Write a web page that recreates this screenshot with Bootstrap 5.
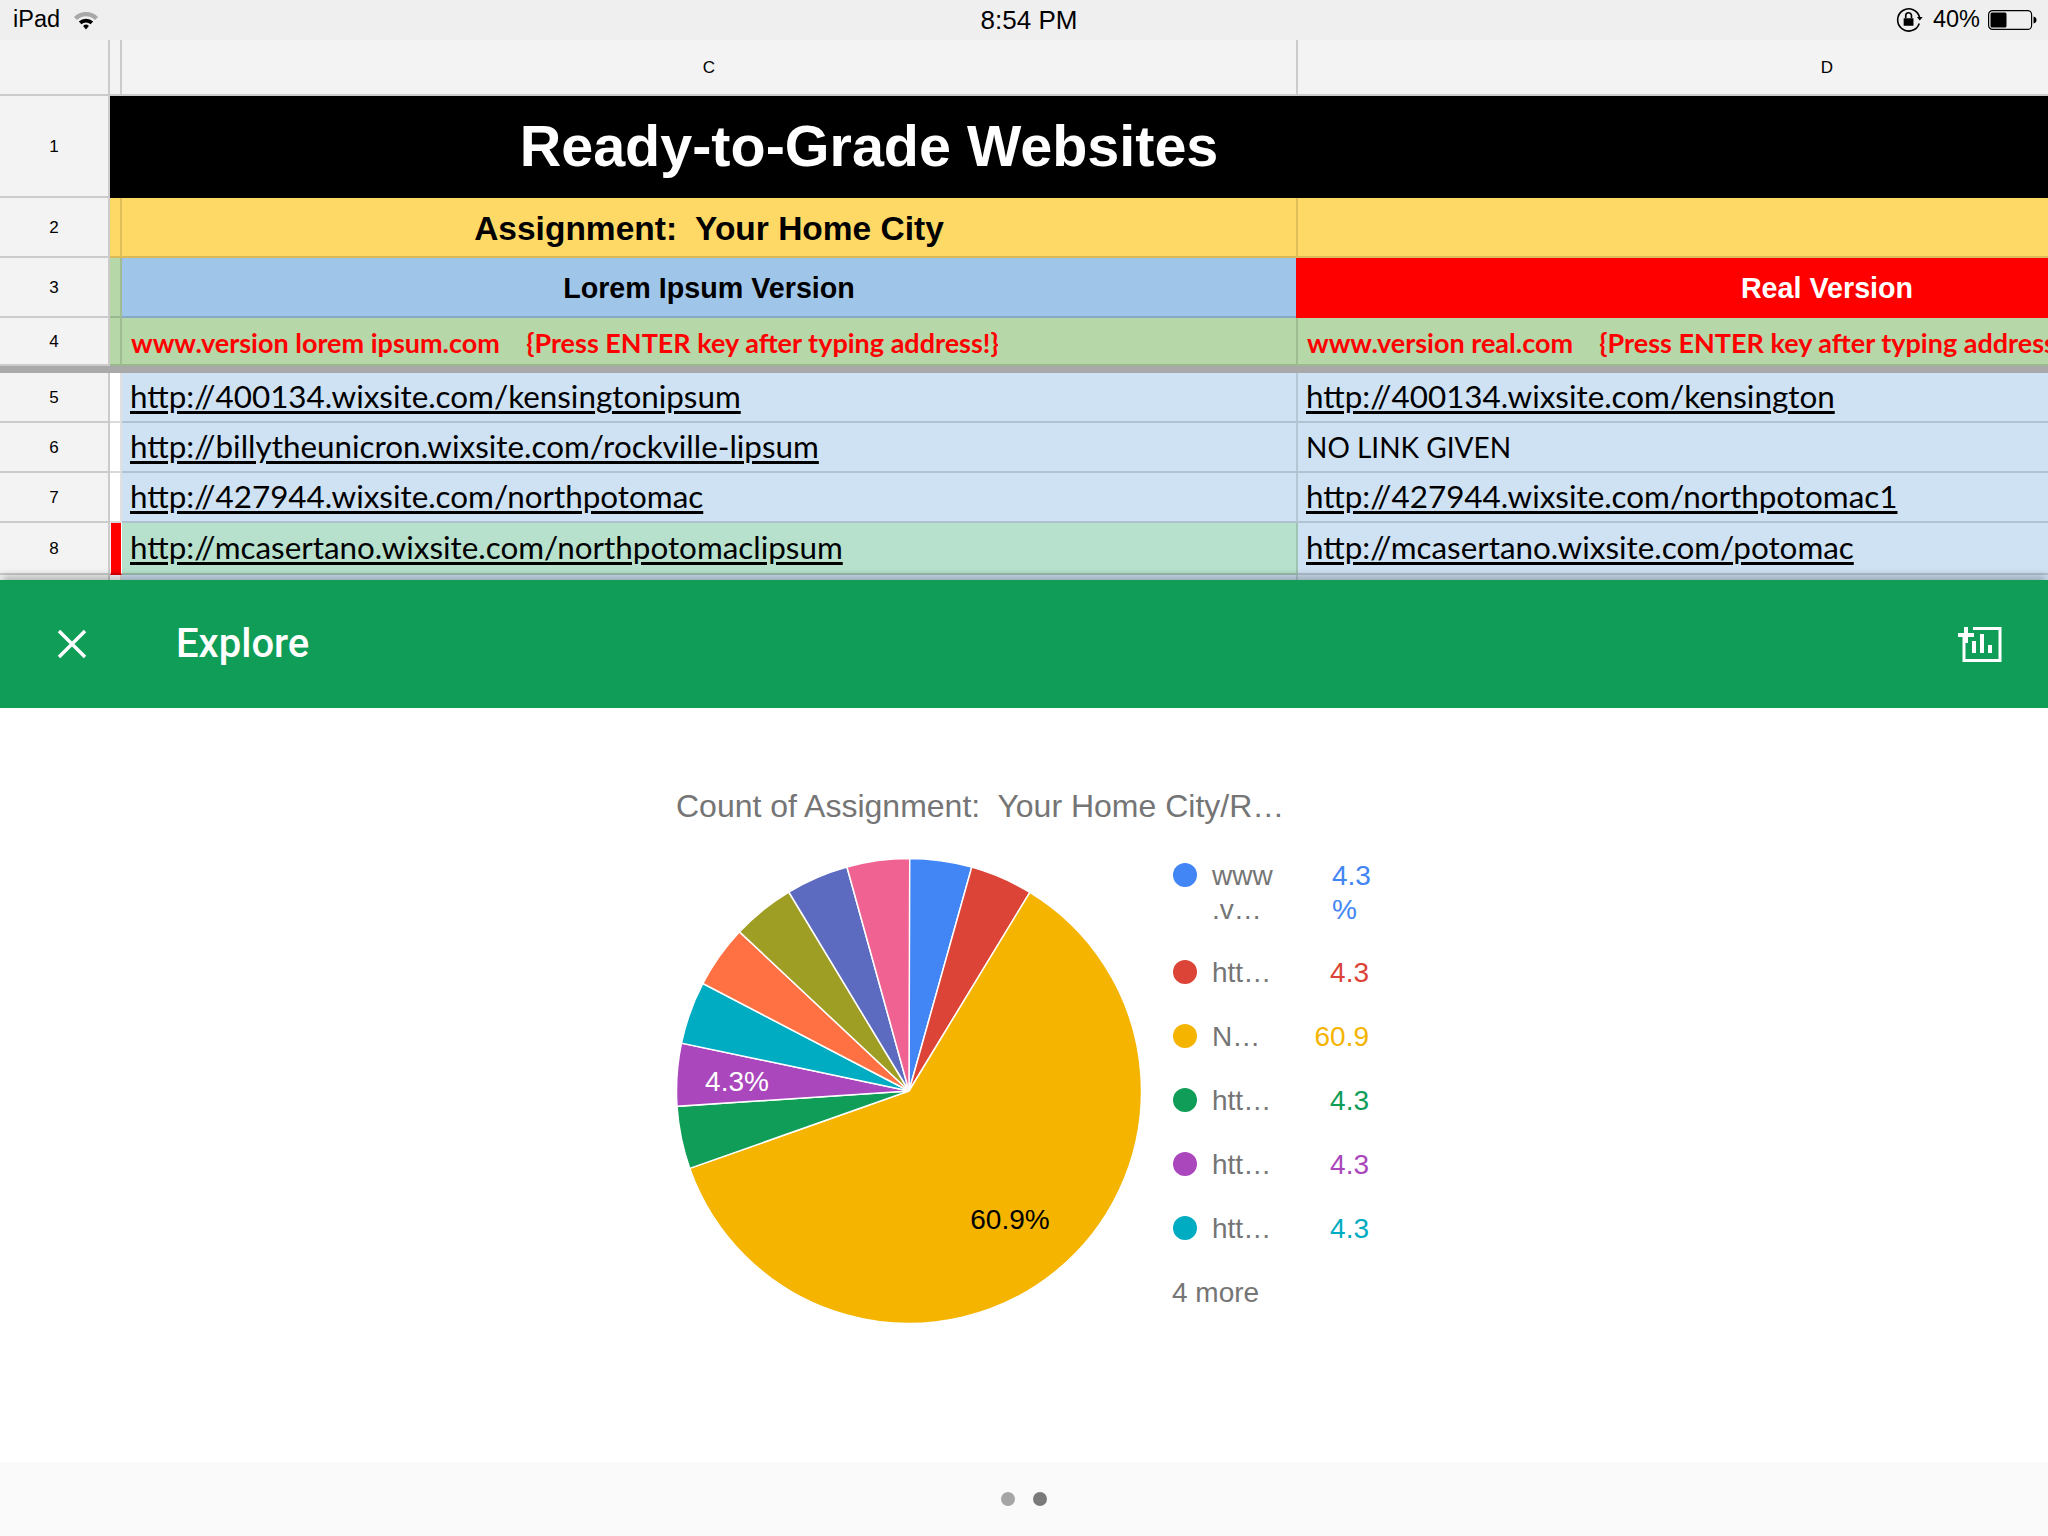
<!DOCTYPE html>
<html lang="en">
<head>
  <meta charset="UTF-8" />
  <meta name="viewport" content="width=device-width, initial-scale=1.0"/>
  <title>Ready-to-Grade Websites</title>
  <link href="https://cdn.jsdelivr.net/npm/bootstrap@5.3.3/dist/css/bootstrap.min.css" rel="stylesheet">
  <style>
    html, body { height: 100%; }
    body {
      width: 2048px;
      height: 1536px;
      overflow: hidden;
      background: #fff;
      font-family: "Liberation Sans", Arial, sans-serif;
      color: #000;
    }

    /* status bar */
    .status-bar { height: 40px; background: #efefef; font-size: 23.5px; padding: 0 11px 0 13px; }
    .status-side { flex: 1 1 0; }
    .status-time { font-size: 26px; margin-left: 8px; }
    .wifi-icon { margin-left: 3px; }

    /* spreadsheet */
    .sheet {
      height: 540px;
      overflow: hidden;
      display: grid;
      grid-template-columns: 110px 12px 1176px 750px;
      grid-template-rows: 56px 102px 60px 60px 48px 7px 50px 50px 50px 52px 20px;
    }
    .cell {
      display: flex;
      align-items: center;
      min-width: 0;
      white-space: pre;
      border-right: 2px solid rgba(0,0,0,.12);
      border-bottom: 2px solid rgba(0,0,0,.14);
      overflow: hidden;
    }
    .cell-last { border-right: 0; }
    .head-cell { background: #f3f3f3; font-size: 17px; justify-content: center; border-color: #cbcbcb; padding-top: 1px; }
    .title-cell {
      grid-column: 2 / 5;
      background: #000;
      color: #fff;
      font-size: 57.5px;
      font-weight: 700;
      justify-content: center;
      padding: 0 420px 2px 0;
      border: 0;
    }
    .band-yellow { background: #ffd966; }
    .band-blue { background: #9fc5e8; }
    .band-red { background: #f00; color: #fff; margin-left: -2px; border-color: #f00; }
    .band-green { background: #b6d7a8; }
    .band-white { background: #fff; }
    .band-link { background: #cfe2f3; }
    .band-mint { background: #b7e1cd; }
    .band-hit { background: #f00; border-left: 1px solid #f3f3f3; border-right: 1px solid #fff; }
    .assign { font-size: 33.5px; font-weight: 700; justify-content: center; padding-top: 4px; }
    .version { font-size: 28.7px; font-weight: 700; justify-content: center; padding-top: 3px; }
    .col-d-center { padding-left: 308px; }
    .band-red.col-d-center { padding-left: 310px; }
    .hint { font-family: Lato, "Liberation Sans", sans-serif; font-size: 27px; font-weight: 700; color: #f00; padding: 5px 0 0 9px; }
    .freeze { grid-column: 1 / 5; background: #a9a9a9; }
    .url { font-family: Lato, "Liberation Sans", sans-serif; font-size: 31.4px; padding-left: 8px; }
    .url a { color: #000; text-decoration: underline; text-decoration-thickness: 3px; text-underline-offset: 3px; }
    .url-plain { font-size: 28px; }

    /* explore panel */
    .explore-bar {
      height: 128px;
      background: #0f9d58;
      color: #fff;
      position: relative;
      box-shadow: 0 -6px 8px -2px rgba(0,0,0,.25);
    }
    .close-icon { margin-left: 55px; }
    .explore-title { font-family: Roboto, "Liberation Sans", sans-serif; font-size: 40px; font-weight: 500; margin-left: 87px; }
    .add-icon { margin-right: 44px; }
    .explore-body { height: 754px; padding: 0 0 0 676px; }
    .chart-title { font-size: 32px; color: #757575; white-space: pre; padding-top: 80px; height: 151px; line-height: 36px; }
    .pie { width: 466px; height: 466px; display: block; margin-top: -1px; }
    .pie text { font-size: 28px; font-family: "Liberation Sans", sans-serif; }
    .legend { margin-left: 31px; font-size: 28px; line-height: 34px; color: #757575; width: 196px; }
    .legend-row { display: flex; margin-bottom: 30px; }
    .legend-row-first { margin-bottom: 29px; }
    .legend-dot { width: 24px; height: 24px; border-radius: 50%; margin-top: 4px; flex: none; }
    .legend-name { width: 78px; margin-left: 15px; flex: none; }
    .legend-val { flex: 1 1 auto; text-align: right; white-space: nowrap; }
    .legend-val-left { text-align: left; padding-left: 42px; }
    .legend-more { margin-left: -1px; }

    .pager { height: 74px; background: #fafafa; gap: 18px; }
    .pager-dot { width: 14px; height: 14px; border-radius: 50%; background: #a6a6a6; }
    .pager-dot-on { background: #7a7a7a; }
  </style>
</head>
<body>

  <!-- barra di stato -->
  <div class="status-bar d-flex align-items-center">
    <div class="status-side d-flex align-items-center gap-2">
      <span>iPad</span>
      <svg class="wifi-icon" width="30" height="24" viewBox="0 0 24 20">
        <path d="M2 7.500a14 14 0 0 1 20 0l-2.400 2.600a10.500 10.500 0 0 0-15.200 0z" fill="#a8a8a8"/>
        <path d="M6 11.300a8.600 8.600 0 0 1 12 0l-2.200 2.300a5.400 5.400 0 0 0-7.600 0z" fill="#000"/>
        <path d="M9.600 15a3.400 3.400 0 0 1 4.800 0L12 18z" fill="#000"/>
      </svg>
    </div>
    <div class="status-time">8:54 PM</div>
    <div class="status-side d-flex align-items-center justify-content-end gap-2">
      <svg width="30" height="28" viewBox="0 0 26 24">
        <path d="M21 15a9.600 9.600 0 1 1 .3-5" fill="none" stroke="#000" stroke-width="1.400"/>
        <path d="M19 9.500h5l-2.500 3z" fill="#000"/>
        <rect x="7.500" y="10.500" width="8.500" height="6.500" fill="#000"/>
        <path d="M9.300 10.500V8.200a2.500 2.500 0 0 1 5 0v2.300" fill="none" stroke="#000" stroke-width="1.400"/>
      </svg>
      <span>40%</span>
      <svg width="49" height="20" viewBox="0 0 49 20">
        <rect x=".6" y=".6" width="43" height="18.800" rx="4" fill="none" stroke="#000" stroke-width="1.200"/>
        <rect x="2.500" y="2.500" width="16" height="15" rx="1.500" fill="#000"/>
        <path d="M45.500 6.500c2 .4 3 1.800 3 3.500s-1 3.100-3 3.500z" fill="#000"/>
      </svg>
    </div>
  </div>

  <!-- foglio -->
  <div class="sheet">
    <div class="cell head-cell"></div>
    <div class="cell head-cell"></div>
    <div class="cell head-cell">C</div>
    <div class="cell cell-last head-cell col-d-center">D</div>

    <div class="cell head-cell">1</div>
    <div class="cell title-cell">Ready-to-Grade Websites</div>

    <div class="cell head-cell">2</div>
    <div class="cell band-yellow"></div>
    <div class="cell band-yellow assign">Assignment:  Your Home City</div>
    <div class="cell cell-last band-yellow"></div>

    <div class="cell head-cell">3</div>
    <div class="cell band-green"></div>
    <div class="cell band-blue version">Lorem Ipsum Version</div>
    <div class="cell cell-last band-red version col-d-center">Real Version</div>

    <div class="cell head-cell">4</div>
    <div class="cell band-green"></div>
    <div class="cell band-green hint">www.version lorem ipsum.com    {Press ENTER key after typing address!}</div>
    <div class="cell cell-last band-green hint">www.version real.com    {Press ENTER key after typing address!}</div>

    <div class="freeze"></div>

    <div class="cell head-cell">5</div>
    <div class="cell band-white"></div>
    <div class="cell band-link url"><a href="#">http://400134.wixsite.com/kensingtonipsum</a></div>
    <div class="cell cell-last band-link url"><a href="#">http://400134.wixsite.com/kensington</a></div>

    <div class="cell head-cell">6</div>
    <div class="cell band-white"></div>
    <div class="cell band-link url"><a href="#">http://billytheunicron.wixsite.com/rockville-lipsum</a></div>
    <div class="cell cell-last band-link url url-plain">NO LINK GIVEN</div>

    <div class="cell head-cell">7</div>
    <div class="cell band-white"></div>
    <div class="cell band-link url"><a href="#">http://427944.wixsite.com/northpotomac</a></div>
    <div class="cell cell-last band-link url"><a href="#">http://427944.wixsite.com/northpotomac1</a></div>

    <div class="cell head-cell">8</div>
    <div class="cell band-hit"></div>
    <div class="cell band-mint url"><a href="#">http://mcasertano.wixsite.com/northpotomaclipsum</a></div>
    <div class="cell cell-last band-link url"><a href="#">http://mcasertano.wixsite.com/potomac</a></div>

    <div class="cell head-cell"></div>
    <div class="cell band-white"></div>
    <div class="cell band-link"></div>
    <div class="cell cell-last band-link"></div>
  </div>

  <!-- barra Explore -->
  <div class="explore-bar d-flex align-items-center">
    <svg class="close-icon flex-shrink-0" width="34" height="34" viewBox="0 0 34 34">
      <path d="M4 4l26 26M30 4L4 30" stroke="#fff" stroke-width="3.400" fill="none"/>
    </svg>
    <div class="explore-title">Explore</div>
    <svg class="add-icon ms-auto flex-shrink-0" width="48" height="40" viewBox="0 0 48 40">
      <path d="M8 13v23.500h36V4.500H17" fill="none" stroke="#fff" stroke-width="3"/>
      <path d="M2 11h16M10 3v16" fill="none" stroke="#fff" stroke-width="4"/>
      <path d="M16 17h4v12h-4zM24 10h4v19h-4zM32 21h4v8h-4z" fill="#fff"/>
    </svg>
  </div>

  <!-- grafico -->
  <div class="explore-body">
    <div class="chart-title">Count of Assignment:  Your Home City/R…</div>
    <div class="d-flex align-items-start">
      <svg class="pie" id="pie" viewBox="0 0 466 466">
        <text x="61" y="226" fill="#fff" text-anchor="middle" dominant-baseline="middle">4.3%</text>
        <text x="334" y="364" fill="#000" text-anchor="middle" dominant-baseline="middle">60.9%</text>
      </svg>
      <div class="legend">
        <div class="legend-row legend-row-first">
          <span class="legend-dot" style="background:#4285f4"></span>
          <span class="legend-name">www<br>.v…</span>
          <span class="legend-val legend-val-left" style="color:#4285f4">4.3<br>%</span>
        </div>
        <div class="legend-row">
          <span class="legend-dot" style="background:#db4437"></span>
          <span class="legend-name">htt…</span>
          <span class="legend-val" style="color:#db4437">4.3</span>
        </div>
        <div class="legend-row">
          <span class="legend-dot" style="background:#f4b400"></span>
          <span class="legend-name">N…</span>
          <span class="legend-val" style="color:#f4b400">60.9</span>
        </div>
        <div class="legend-row">
          <span class="legend-dot" style="background:#0f9d58"></span>
          <span class="legend-name">htt…</span>
          <span class="legend-val" style="color:#0f9d58">4.3</span>
        </div>
        <div class="legend-row">
          <span class="legend-dot" style="background:#ab47bc"></span>
          <span class="legend-name">htt…</span>
          <span class="legend-val" style="color:#ab47bc">4.3</span>
        </div>
        <div class="legend-row">
          <span class="legend-dot" style="background:#00acc1"></span>
          <span class="legend-name">htt…</span>
          <span class="legend-val" style="color:#00acc1">4.3</span>
        </div>
        <div class="legend-more">4 more</div>
      </div>
    </div>
  </div>

  <div class="pager d-flex align-items-center justify-content-center">
    <span class="pager-dot"></span>
    <span class="pager-dot pager-dot-on"></span>
  </div>

  <script>
    // spicchi della torta, in senso orario dall'alto
    const slices = [
      [4.35, "#4285f4"], [4.35, "#db4437"], [60.9, "#f4b400"], [4.35, "#0f9d58"], [4.35, "#ab47bc"],
      [4.35, "#00acc1"], [4.35, "#ff7043"], [4.35, "#9e9d24"], [4.35, "#5c6bc0"], [4.35, "#f06292"]
    ];
    const pie = document.getElementById("pie");
    const first = pie.firstElementChild;
    const cx = 233, cy = 233, r = 232.5;
    let start = 0;
    slices.forEach(([pct, color]) => {
      const end = start + pct / 100 * Math.PI * 2;
      const x1 = cx + r * Math.sin(start), y1 = cy - r * Math.cos(start);
      const x2 = cx + r * Math.sin(end), y2 = cy - r * Math.cos(end);
      const large = pct > 50 ? 1 : 0;
      const p = document.createElementNS("http://www.w3.org/2000/svg", "path");
      p.setAttribute("d", `M${cx} ${cy}L${x1} ${y1}A${r} ${r} 0 ${large} 1 ${x2} ${y2}Z`);
      p.setAttribute("fill", color);
      p.setAttribute("stroke", "#fff");
      p.setAttribute("stroke-width", "1.500");
      pie.insertBefore(p, first);
      start = end;
    });
  </script>
  <script src="https://cdn.jsdelivr.net/npm/bootstrap@5.3.3/dist/js/bootstrap.bundle.min.js"></script>
</body>
</html>
